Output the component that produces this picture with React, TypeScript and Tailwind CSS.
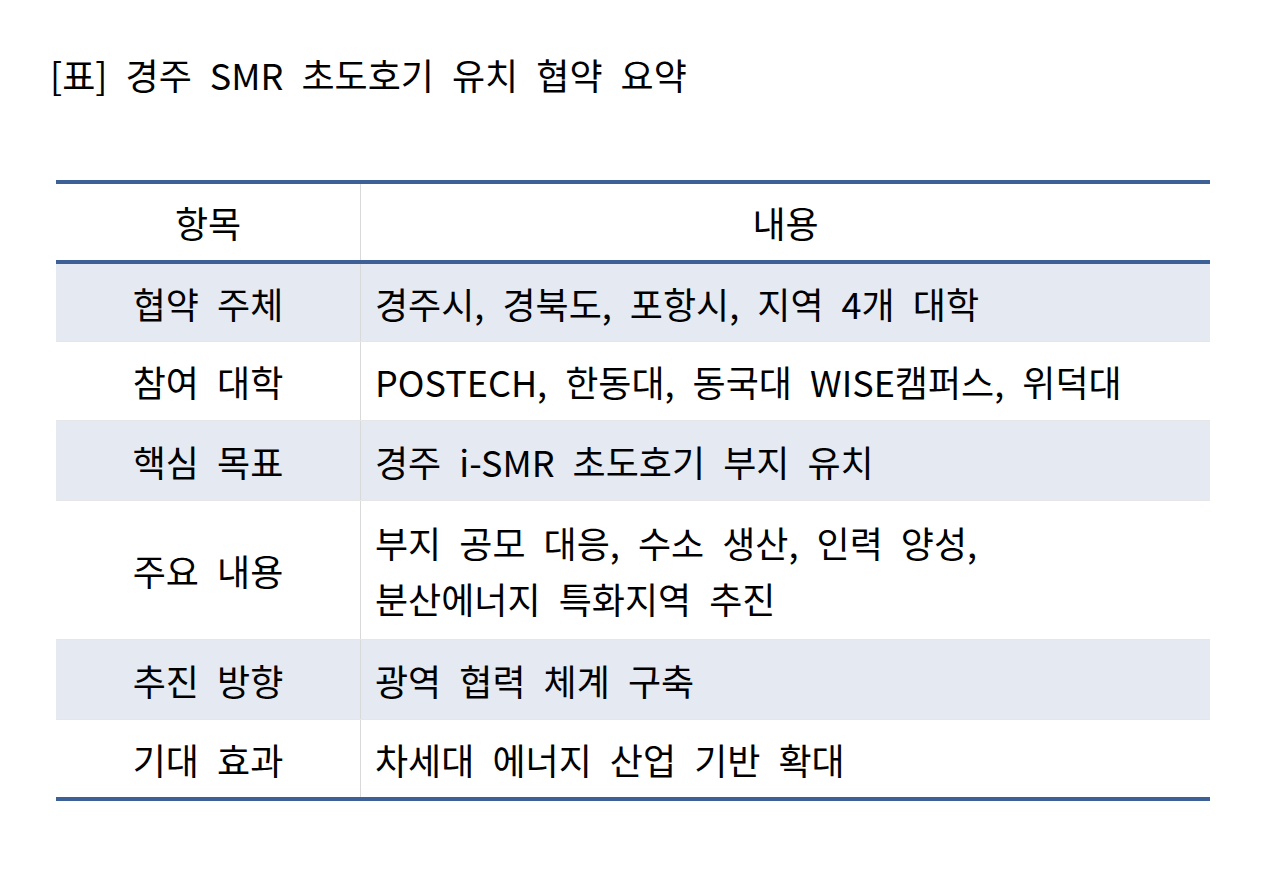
const rows: { k: string; v: string[]; shade: boolean; h: string }[] = [
  { k: '협약 주체', v: ['경주시, 경북도, 포항시, 지역 4개 대학'], shade: true, h: 'h-[78px]' },
  { k: '참여 대학', v: ['POSTECH, 한동대, 동국대 WISE캠퍼스, 위덕대'], shade: false, h: 'h-[79px]' },
  { k: '핵심 목표', v: ['경주 i-SMR 초도호기 부지 유치'], shade: true, h: 'h-[80px]' },
  { k: '주요 내용', v: ['부지 공모 대응, 수소 생산, 인력 양성,', '분산에너지 특화지역 추진'], shade: false, h: 'h-[139px]' },
  { k: '추진 방향', v: ['광역 협력 체계 구축'], shade: true, h: 'h-[80px]' },
  { k: '기대 효과', v: ['차세대 에너지 산업 기반 확대'], shade: false, h: 'h-[77px]' },
];

export default function App() {
  return (
    <div
      className="w-[1280px] h-[888px] bg-white text-black pt-[50px]"
      style={{ fontFamily: '"Noto Sans CJK KR", "Noto Sans", sans-serif' }}
    >
      <h1 className="ml-[50px] text-[36px] leading-[48px] [word-spacing:10px]">[표] 경주 SMR 초도호기 유치 협약 요약</h1>

      <div className="mx-[56px] mt-[82px] w-[1154px] border-t-4 border-b-4 border-[#3d6196]">
        <div className="flex h-[80px] border-b-4 border-[#3d6196] text-[36px]">
          <div className="w-[305px] flex items-center justify-center border-r border-[#d9d9d9]">항목</div>
          <div className="flex-1 flex items-center justify-center">내용</div>
        </div>
        {rows.map((r, i) => (
          <div
            key={r.k}
            className={`flex text-[36px] leading-[56px] [word-spacing:10px] ${r.h} ${r.shade ? 'bg-[#e4e9f2]' : 'bg-white'} ${i < rows.length - 1 ? 'border-b border-[#e6e6e6]' : ''}`}
          >
            <div className="w-[305px] flex items-center justify-center border-r border-[#d9d9d9]">{r.k}</div>
            <div className="flex-1 flex flex-col justify-center pl-[14px]">
              {r.v.map((line) => (
                <div key={line}>{line}</div>
              ))}
            </div>
          </div>
        ))}
      </div>
    </div>
  );
}
